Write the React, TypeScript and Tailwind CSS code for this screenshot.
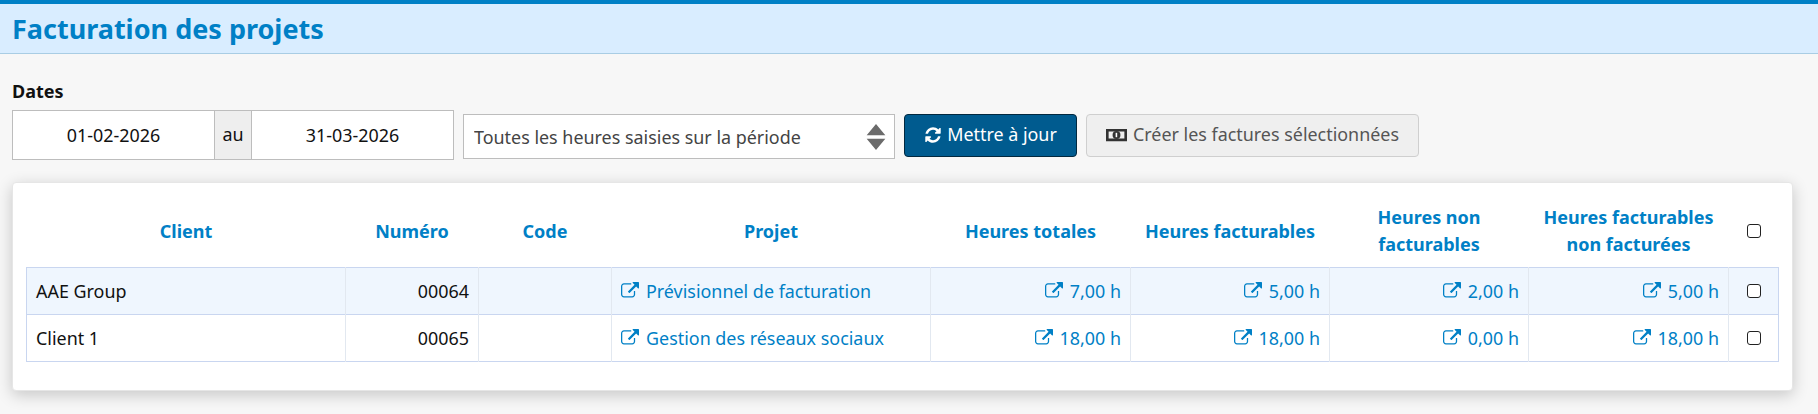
import React from "react";

const EXT = "M1408 928v320q0 119-84.5 203.5t-203.5 84.5h-832q-119 0-203.5-84.5t-84.5-203.5v-832q0-119 84.5-203.5t203.5-84.5h704q14 0 23 9t9 23v64q0 14-9 23t-23 9h-704q-66 0-113 47t-47 113v832q0 66 47 113t113 47h832q66 0 113-47t47-113v-320q0-14 9-23t23-9h64q14 0 23 9t9 23zm384-864v512q0 26-19 45t-45 19-45-19l-176-176-652 652q-10 10-23 10t-23-10l-114-114q-10-10-10-23t10-23l652-652-176-176q-19-19-19-45t19-45 45-19h512q26 0 45 19t19 45z";
const REFRESH = "M1639 1056q0 5-1 7-64 268-268 434.5t-478 166.5q-146 0-282.5-55t-243.5-157l-129 129q-19 19-45 19t-45-19-19-45v-448q0-26 19-45t45-19h448q26 0 45 19t19 45-19 45l-137 137q71 66 161 102t187 36q134 0 250-65t186-179q11-17 53-117 8-23 30-23h192q13 0 22.5 9.5t9.5 22.5zm25-800v448q0 26-19 45t-45 19h-448q-26 0-45-19t-19-45 19-45l138-138q-148-137-349-137-134 0-250 65t-186 179q-11 17-53 117-8 23-30 23h-199q-13 0-22.5-9.5t-9.5-22.5v-7q65-268 270-434.5t480-166.5q146 0 284 55.5t245 156.5l130-129q19-19 45-19t45 19 19 45z";

const Ext = () => (
  <svg viewBox="0 0 1792 1792" className="inline-block w-[18px] h-[18px] fill-current align-[-2px] mr-[7px]">
    <path d={EXT} />
  </svg>
);

const Box = () => (
  <input type="checkbox" className="block mx-auto appearance-none w-[14px] h-[14px] bg-white border-[1.5px] border-[#222] rounded-[3px]" />
);

const headers: [string, string][] = [
  ["Client", "w-[319px]"],
  ["Numéro", "w-[133px]"],
  ["Code", "w-[133px]"],
  ["Projet", "w-[319px]"],
  ["Heures totales", "w-[200px]"],
  ["Heures facturables", "w-[199px]"],
  ["Heures non facturables", "w-[199px]"],
  ["Heures facturables non facturées", "w-[200px]"],
];

const rows = [
  { client: "AAE Group", num: "00064", projet: "Prévisionnel de facturation", h: ["7,00 h", "5,00 h", "2,00 h", "5,00 h"], bg: "bg-[#eff6fe]" },
  { client: "Client 1", num: "00065", projet: "Gestion des réseaux sociaux", h: ["18,00 h", "18,00 h", "0,00 h", "18,00 h"], bg: "bg-white" },
];

const cell = "border-r border-[#e2e8f0] px-[9px] h-[47px] text-[17.92px] leading-[24px]";

export default function App() {
  return (
    <div className="min-h-[414px] bg-[#f7f7f7] font-['Noto_Sans',sans-serif] text-[#111]">
      <header className="border-t-4 border-t-[#0080c6] bg-[#d9edff] border-b border-b-[#a9cde4] h-[54px] px-[12px] flex items-center">
        <h1 className="text-[27px] font-bold text-[#0080c6] leading-none">Facturation des projets</h1>
      </header>
      <div className="px-[12px] pt-[26px]">
        <div className="text-[18px] font-bold leading-[22px] mb-[8px]">Dates</div>
        <div className="flex items-start">
          <div className="flex h-[50px] w-[442px] border border-[#bdbdbd] bg-white text-[17.92px]">
            <input readOnly value="01-02-2026" className="w-[201px] text-center outline-none" />
            <span className="w-[38px] flex items-center justify-center bg-[#eeeeee] border-x border-[#bdbdbd] pb-[2px]">au</span>
            <input readOnly value="31-03-2026" className="flex-1 min-w-0 text-center outline-none" />
          </div>
          <div className="relative ml-[9px] mt-[4px] w-[432px] h-[45px]">
            <select className="appearance-none w-full h-full border border-[#bdbdbd] bg-white pl-[10px] pt-[2px] text-[17.92px] text-[#444] outline-none">
              <option>Toutes les heures saisies sur la période</option>
            </select>
            <svg viewBox="0 0 20 30" className="absolute right-[9px] top-[9px] w-[20px] h-[28px] fill-[#6b6b6b] pointer-events-none">
              <path d="M10 1 L20 13 H0 Z M0 17 H20 L10 29 Z" />
            </svg>
          </div>
          <button className="ml-[9px] mt-[4px] h-[43px] w-[173px] pb-[2px] rounded-[4px] bg-[#005b8f] border border-[#02283f] text-white text-[17.92px] flex items-center justify-center">
            <svg viewBox="0 0 1792 1792" className="w-[18px] h-[18px] fill-current mr-[5px]"><path d={REFRESH} /></svg>
            Mettre à jour
          </button>
          <button className="ml-[9px] mt-[4px] h-[43px] w-[333px] pb-[2px] rounded-[4px] bg-[#efefef] border border-[#cfcfcf] text-[#555] text-[17.92px] flex items-center justify-center">
            <svg viewBox="0 0 24 16" className="w-[21px] h-[14px] mr-[6px]">
              <path fillRule="evenodd" fill="#333" d="M0 1h24v14H0z M3 4h18v8H3z" />
              <ellipse cx="12" cy="8" rx="4.5" ry="4.5" fill="#333" />
              <path d="M11 5.5h1.8v5H11z" fill="#fff" />
            </svg>
            Créer les factures sélectionnées
          </button>
        </div>
        <div className="mt-[22px] w-[1781px] h-[209px] bg-white border border-[#e6e6e6] rounded-[4px] shadow-[0_4px_16px_rgba(0,0,0,0.2)] px-[13px] pt-[12px]">
          <table className="table-fixed border-collapse w-[1752px]">
            <thead>
              <tr className="h-[72px]">
                {headers.map(([t, w]) => (
                  <th key={t} className={`${w} px-[9px] pt-[1px] text-center text-[18px] font-bold leading-[27px] text-[#0080c6]`}>{t}</th>
                ))}
                <th className="w-[50px]"><Box /></th>
              </tr>
            </thead>
            <tbody>
              {rows.map((r) => (
                <tr key={r.num} className={`${r.bg} border border-[#c9d6f0]`}>
                  <td className={`${cell} text-left`}>{r.client}</td>
                  <td className={`${cell} text-right`}>{r.num}</td>
                  <td className={cell}></td>
                  <td className={`${cell} text-left text-[#0080c6]`}><Ext />{r.projet}</td>
                  {r.h.map((v, i) => (
                    <td key={i} className={`${cell} text-right text-[#0080c6]`}><Ext />{v}</td>
                  ))}
                  <td className="h-[47px]"><Box /></td>
                </tr>
              ))}
            </tbody>
          </table>
        </div>
      </div>
    </div>
  );
}
